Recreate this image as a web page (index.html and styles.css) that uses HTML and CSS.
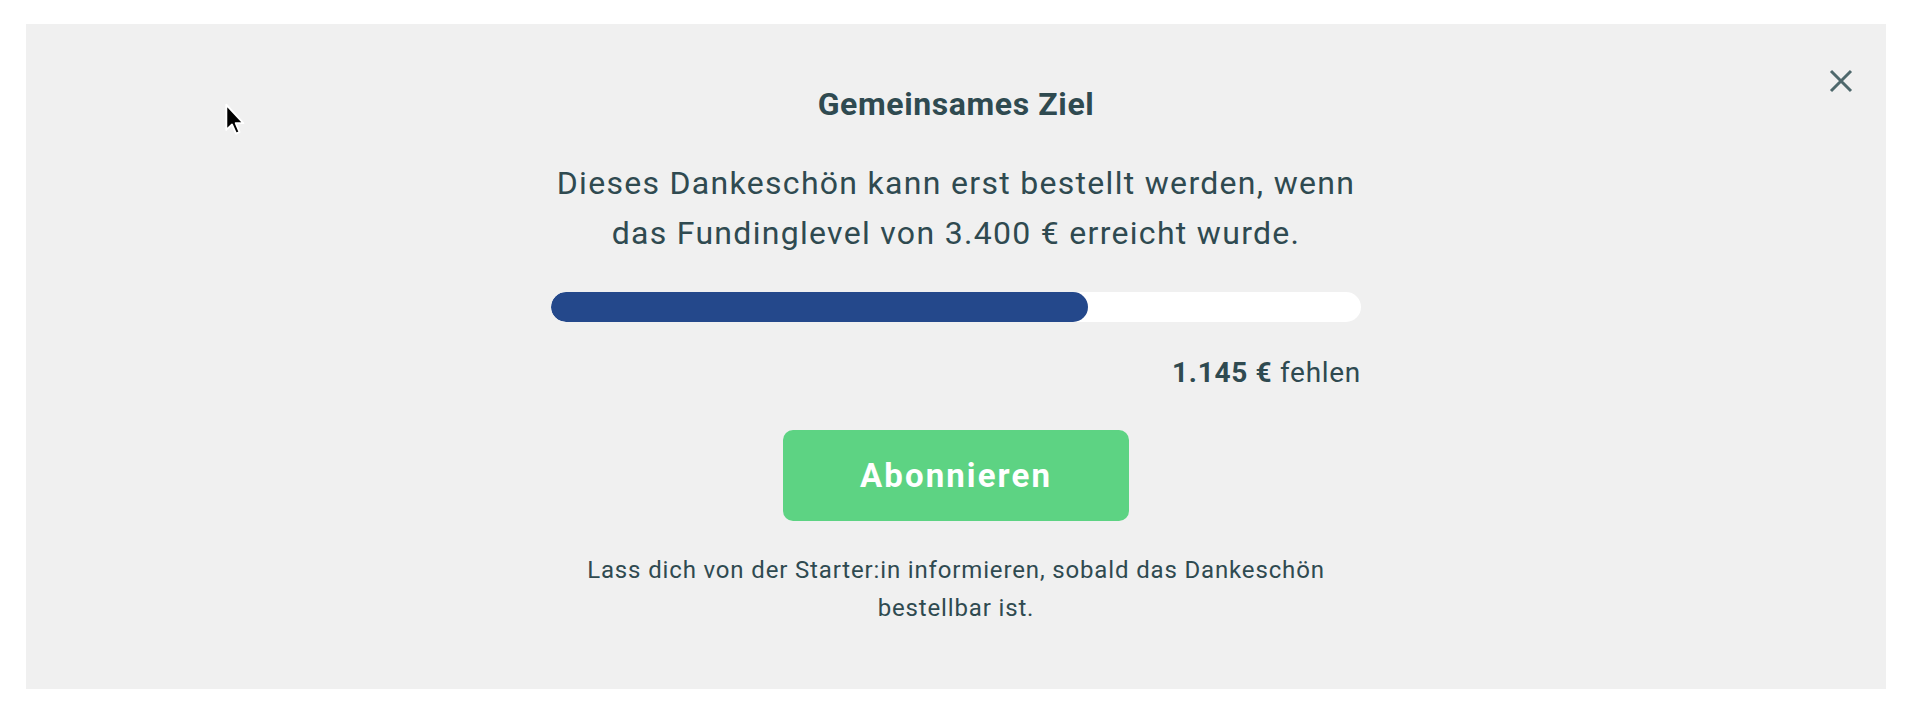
FILE: index.html
```html
<!DOCTYPE html>
<html lang="de">
<head>
<meta charset="utf-8">
<title>Gemeinsames Ziel</title>
<link rel="stylesheet" href="styles.css">
</head>
<body>
<div class="modal">
  <button class="close" aria-label="Schließen">
    <svg viewBox="0 0 24 24" width="24" height="24"><path d="M2 2 L22 22 M22 2 L2 22" stroke="currentColor" stroke-width="3" stroke-linecap="butt" fill="none"/></svg>
  </button>
  <svg class="cursor" viewBox="0 0 12 19" width="22" height="33"><path d="M1 1 L1 15.5 L4.3 12.4 L6.6 17.6 L8.6 16.7 L6.4 11.6 L10.8 11.6 Z" fill="#000" stroke="#fff" stroke-width="1.1" stroke-linejoin="round"/></svg>
  <div class="content">
    <h2 class="title">Gemeinsames Ziel</h2>
    <p class="desc">Dieses Dankeschön kann erst bestellt werden, wenn das Fundinglevel von 3.400 € erreicht wurde.</p>
    <div class="bar"><div class="fill" style="width: 66.3%"></div></div>
    <p class="missing"><strong>1.145 €</strong> fehlen</p>
    <button class="subscribe">Abonnieren</button>
    <p class="note">Lass dich von der Starter:in informieren, sobald das Dankeschön bestellbar ist.</p>
  </div>
</div>
</body>
</html>
```
FILE: styles.css
```css
html, body {
  margin: 0;
  padding: 0;
  background: #ffffff;
}
body {
  font-family: Roboto, "Liberation Sans", sans-serif;
  color: #2f4a50;
}
.modal {
  position: relative;
  margin: 24px 24px 27px 26px;
  height: 665px;
  background: #f0f0f0;
  display: flex;
  justify-content: center;
}
.close {
  position: absolute;
  top: 45px;
  right: 33px;
  width: 24px;
  height: 24px;
  padding: 0;
  border: 0;
  background: none;
  color: #4e686c;
  cursor: pointer;
}
.close svg { display: block; }
.cursor {
  position: absolute;
  left: 198px;
  top: 79px;
}
.content {
  width: 810px;
  padding-top: 60px;
  display: flex;
  flex-direction: column;
  align-items: center;
  text-align: center;
}
.title {
  margin: 0;
  font-size: 32px;
  line-height: 40px;
  font-weight: 700;
  letter-spacing: 0.6px;
}
.desc {
  margin: 34px 0 0;
  width: 830px;
  flex: none;
  font-size: 32px;
  line-height: 50px;
  font-weight: 400;
  letter-spacing: 1.3px;
}
.bar {
  margin-top: 34px;
  width: 100%;
  height: 30px;
  background: #ffffff;
  border-radius: 15px;
  overflow: hidden;
}
.fill {
  height: 100%;
  background: #24488b;
  border-radius: 15px;
}
.missing {
  margin: 33px 0 0;
  align-self: flex-end;
  font-size: 28px;
  line-height: 36px;
  letter-spacing: 0.7px;
}
.missing strong { font-weight: 700; }
.subscribe {
  margin-top: 39px;
  width: 346px;
  height: 91px;
  border: 0;
  border-radius: 10px;
  background: #5dd383;
  color: #ffffff;
  font-family: inherit;
  font-size: 33px;
  font-weight: 700;
  letter-spacing: 2.1px;
  cursor: pointer;
}
.note {
  margin: 30px 0 0;
  font-size: 24px;
  line-height: 38px;
  letter-spacing: 0.85px;
}
```
